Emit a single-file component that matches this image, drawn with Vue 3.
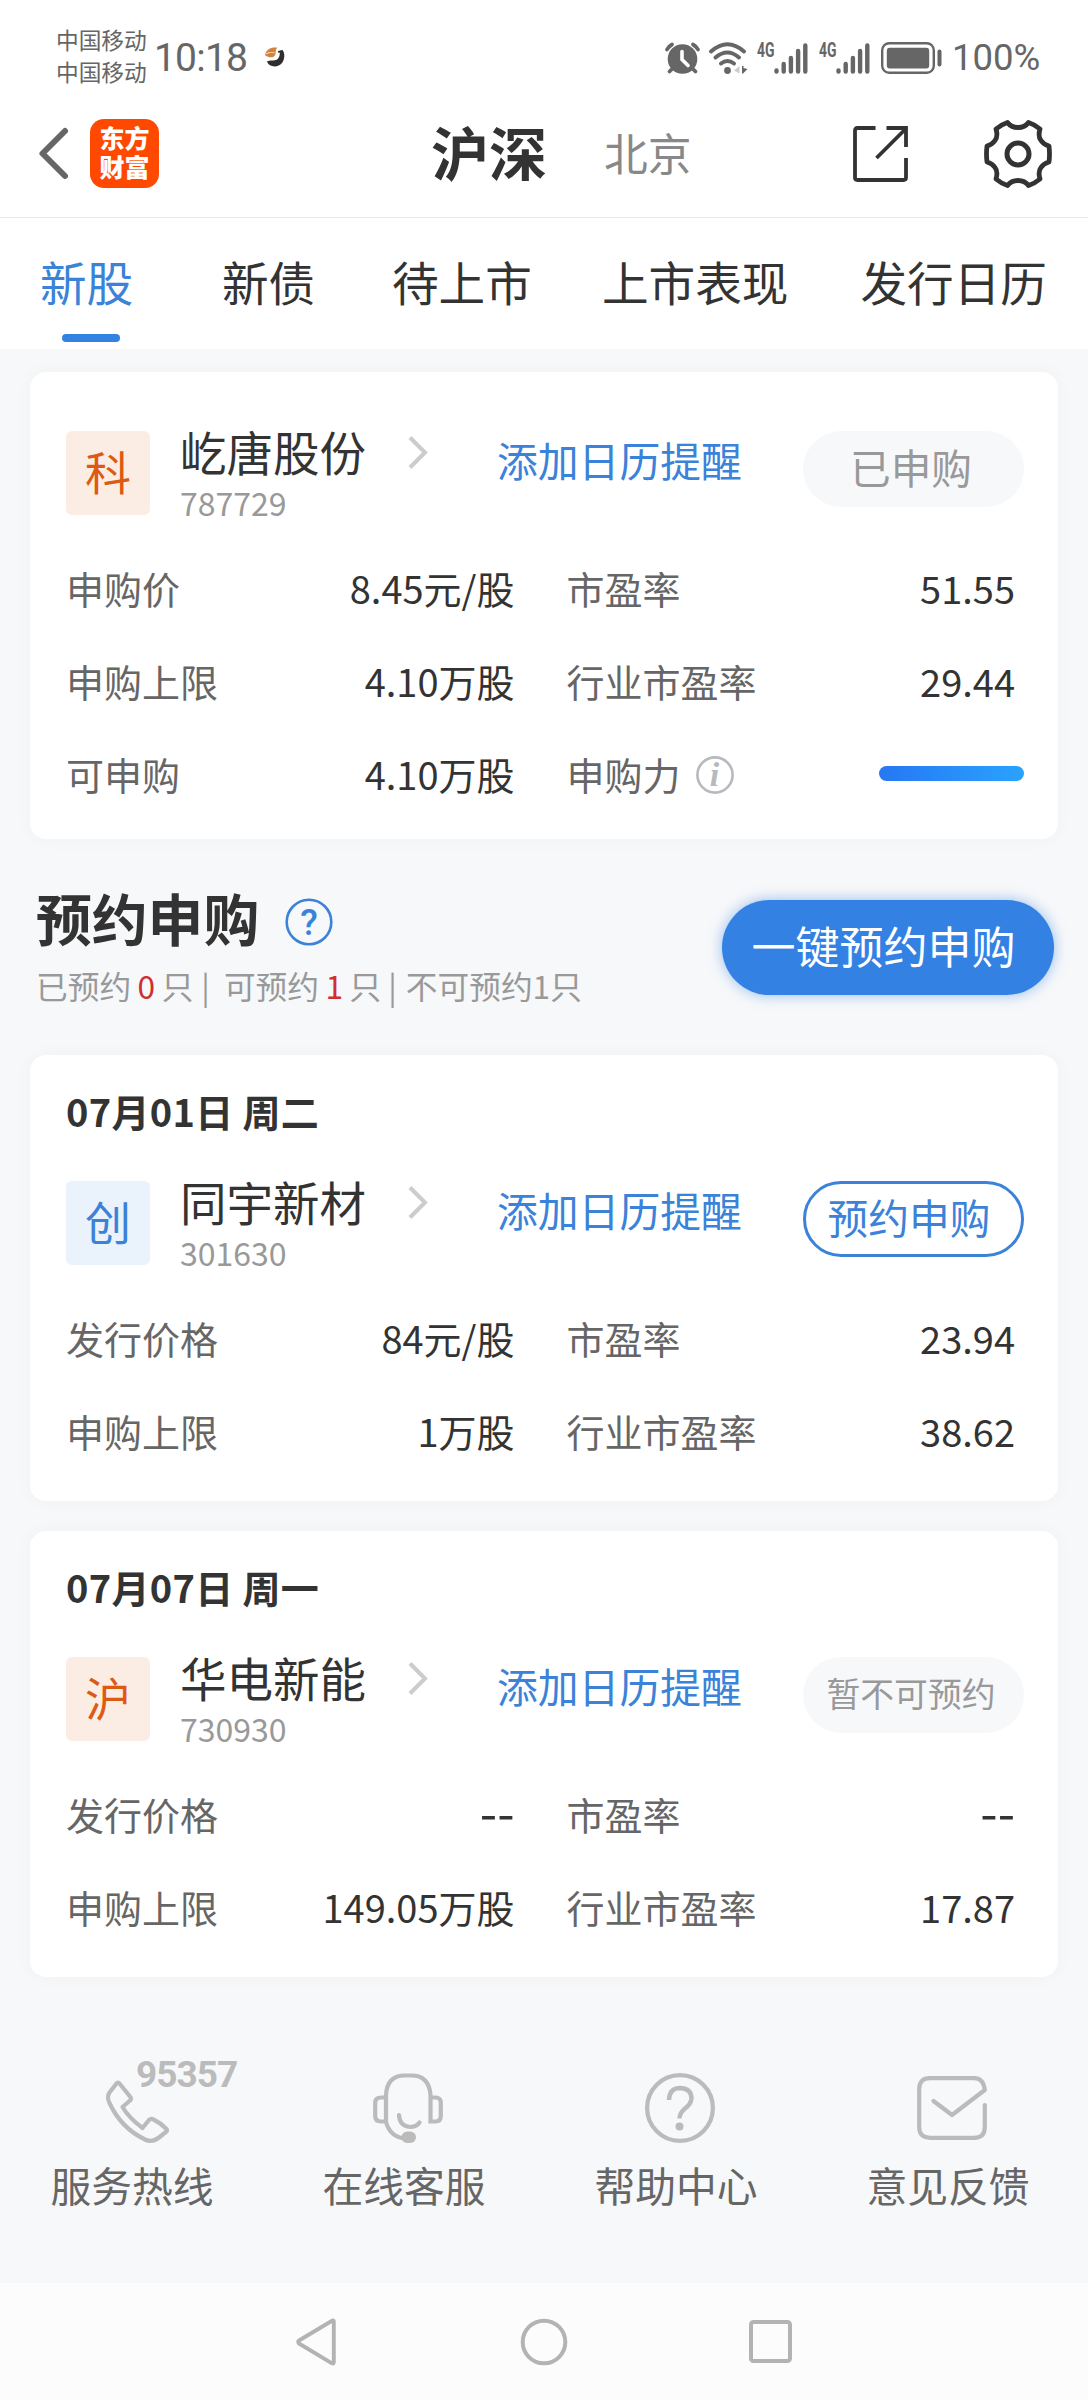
<script setup>
const tabs = ['新股', '新债', '待上市', '上市表现', '发行日历']

const cards = [
  {
    code: '787729', name: '屹唐股份', tag: '科', tone: 'orange',
    action: '已申购', actionStyle: 'done',
    rows: [
      [{ k: '申购价', v: '8.45元/股' }, { k: '市盈率', v: '51.55' }],
      [{ k: '申购上限', v: '4.10万股' }, { k: '行业市盈率', v: '29.44' }],
      [{ k: '可申购', v: '4.10万股' }, { k: '申购力', bar: true }]
    ]
  },
  {
    date: '07月01日 周二', code: '301630', name: '同宇新材', tag: '创', tone: 'blue',
    action: '预约申购', actionStyle: 'outline',
    rows: [
      [{ k: '发行价格', v: '84元/股' }, { k: '市盈率', v: '23.94' }],
      [{ k: '申购上限', v: '1万股' }, { k: '行业市盈率', v: '38.62' }]
    ]
  },
  {
    date: '07月07日 周一', code: '730930', name: '华电新能', tag: '沪', tone: 'orange',
    action: '暂不可预约', actionStyle: 'disabled',
    rows: [
      [{ k: '发行价格', v: '--' }, { k: '市盈率', v: '--' }],
      [{ k: '申购上限', v: '149.05万股' }, { k: '行业市盈率', v: '17.87' }]
    ]
  }
]
</script>

<template>
  <div class="page">
    <div class="status">
      <div class="carriers"><span>中国移动</span><span>中国移动</span></div>
      <span class="time">10:18</span>
      <svg class="bird" width="20" height="20" viewBox="0 0 20 20">
        <path d="M2 14.500C5 12.500 8.500 14 11 13C14 12 15.500 8 14.500 3.500L17.500 3C20 6 20 12 17 16C13 21 4 20.500 2 14.500Z" fill="#2f2d2e" />
        <path d="M0 8C1 2 7 -0.500 12.500 0.800C9.500 3 12 6 9.500 9C8 11 3 10.500 0.500 8.500Z" fill="#d4813e" />
        <path d="M0.500 6.500C4 4.500 7 5 10 5.300L9.500 6.300C6 5.500 4 6 0.500 7.500Z" fill="#f5cda4" />
        <circle cx="14" cy="4.800" r="1.100" fill="#2f2d2e" />
      </svg>
      <div class="indicators">
        <svg width="35" height="32" viewBox="0 0 35 32">
          <circle cx="17.500" cy="17" r="14.800" fill="#666" />
          <path d="M2 7.500Q3.500 4.500 7 2.500M33 7.500Q31.500 4.500 28 2.500M7 27L4.500 29.500M28 27L30.500 29.500" stroke="#666" stroke-width="3.800" stroke-linecap="round" fill="none" />
          <path d="M17 9.500V17.500L23 23.500" stroke="#fff" stroke-width="3.600" stroke-linecap="round" fill="none" />
        </svg>
        <svg class="wifi" width="39" height="32" viewBox="0 0 39 32">
          <g fill="none" stroke="#666" stroke-width="4" stroke-linecap="round">
            <path d="M2 9.500Q18.500 -5 35 9.500" />
            <path d="M6.500 15.500Q18.500 5.500 30 15.500" />
            <path d="M12 21.500Q18.500 16.500 25 21.500" />
          </g>
          <circle cx="18.500" cy="28.500" r="3.400" fill="#666" />
          <path d="M25 28.500L30.500 24V31.500Z" fill="#ccc" />
          <path d="M33 24L34.500 24L34.500 26L38.500 27L34 31.500H33Z" fill="#666" />
        </svg>
        <svg v-for="n in 2" :key="n" class="signal" width="52" height="32" viewBox="0 0 52 32">
          <text x="0" y="15" font-size="19.500" font-weight="700" fill="#666" textLength="17.500" lengthAdjust="spacingAndGlyphs">4G</text>
          <g stroke="#666" stroke-width="4.400" stroke-linecap="round">
            <path d="M19.500 28.500V29.500M26.700 22V29.500M33.900 16V29.500M41.100 9V29.500M48.300 3.500V29.500" />
          </g>
        </svg>
        <svg class="battery" width="61" height="32" viewBox="0 0 61 32">
          <rect x="1.200" y="1.200" width="51.600" height="29.600" rx="7" fill="none" stroke="#666" stroke-width="2.400" />
          <rect x="5.800" y="5.800" width="42.400" height="20.600" rx="3" fill="#666" />
          <rect x="56.500" y="7.500" width="4" height="17" rx="2" fill="#666" />
        </svg>
        <span class="percent">100%</span>
      </div>
    </div>

    <header class="header">
      <svg class="back" width="29" height="51" viewBox="0 0 29 51">
        <path d="M26 3L3.500 25.500L26 48" fill="none" stroke="#666" stroke-width="6" stroke-linecap="round" stroke-linejoin="round" />
      </svg>
      <div class="logo"><span>东方</span><span>财富</span></div>
      <span class="market active">沪深</span>
      <span class="market">北京</span>
      <svg class="share" width="55" height="56" viewBox="0 0 55 56">
        <path d="M22.500 2H4.500Q2 2 2 4.500V51.500Q2 54 4.500 54H50.500Q53 54 53 51.500V32M33.500 2H53V21M23.500 32L52.500 3" fill="none" stroke="#333" stroke-width="3.800" />
      </svg>
      <svg class="gear" width="68" height="68" viewBox="0 0 68 68">
        <path d="M23.500 2.500C26 6 29 7.500 34 7.500S42 6 44.500 2.500C49 4 52.500 6 56 9C54.500 14 55 18 57 20.500C59 23.500 61.500 25 65 26Q66 34 65 42C61.500 43 59 44.500 57 47.500C55 50 54.500 54 56 59C52.500 62 49 64 44.500 65.500C42 62 39 60.500 34 60.500S26 62 23.500 65.500C19 64 15.500 62 12 59C13.500 54 13 50 11 47.500C9 44.500 6.500 43 3 42Q2 34 3 26C6.500 25 9 23.500 11 20.500C13 18 13.500 14 12 9C15.500 6 19 4 23.500 2.500Z" fill="none" stroke="#333" stroke-width="4.800" stroke-linejoin="round" />
        <circle cx="34" cy="34" r="11" fill="none" stroke="#333" stroke-width="5" />
      </svg>
    </header>

    <nav class="tabs">
      <span v-for="(t, i) in tabs" :key="t" class="tab" :class="{ active: i === 0 }">{{ t }}</span>
    </nav>

    <main class="content">
      <template v-for="(c, i) in cards" :key="c.code">
        <section class="card" :class="{ dated: c.date }">
          <div v-if="c.date" class="date">{{ c.date }}</div>
          <div class="head">
            <span class="badge" :class="c.tone">{{ c.tag }}</span>
            <div class="ident">
              <span class="name">{{ c.name }}</span>
              <span class="code">{{ c.code }}</span>
            </div>
            <svg class="chev" width="20" height="33" viewBox="0 0 20 33">
              <path d="M2 1.500L17 16.500L2 31.500" fill="none" stroke="#ccc" stroke-width="4" />
            </svg>
            <span class="remind">添加日历提醒</span>
            <span class="action" :class="c.actionStyle">{{ c.action }}</span>
          </div>
          <div class="rows">
            <div v-for="(r, j) in c.rows" :key="j" class="row">
              <div v-for="cell in r" :key="cell.k" class="cell">
                <span class="label">{{ cell.k }}</span>
                <template v-if="cell.bar">
                  <svg class="info" width="38" height="38" viewBox="0 0 38 38">
                    <circle cx="19" cy="19" r="17.600" fill="none" stroke="#b6b9be" stroke-width="2.600" />
                    <text x="18.500" y="30" text-anchor="middle" class="info-i">i</text>
                  </svg>
                  <span class="power"></span>
                </template>
                <span v-else class="value" :class="{ none: cell.v === '--' }">{{ cell.v }}</span>
              </div>
            </div>
          </div>
        </section>

        <div v-if="i === 0" class="section">
          <div>
            <div class="title">
              <span>预约申购</span>
              <svg width="48" height="48" viewBox="0 0 48 48">
                <circle cx="24" cy="24" r="22.300" fill="none" stroke="#3b82d9" stroke-width="2.600" />
                <text x="24" y="36.500" text-anchor="middle" class="ask">?</text>
              </svg>
            </div>
            <div class="summary">
              <span>已预约</span><b>0</b><span>只</span><i class="s1">|</i>
              <span>可预约</span><b>1</b><span>只</span><i class="s2">|</i><span>不可预约1只</span>
            </div>
          </div>
          <span class="batch">一键预约申购</span>
        </div>
      </template>

      <footer class="support">
        <div class="item">
          <div class="icon">
            <svg width="70" height="70" viewBox="-5 -7 70 70">
              <path d="M10.500 3.500Q12 1.800 13.500 3.500L24 16.500Q26 19 24 20.500L16.500 27Q23 38 36.500 48L43 40Q45 38 47.500 39.500Q54 42.500 60.500 49Q61.500 50.500 60.500 51.500L53 57.500Q46 63 39 59.500Q15 48 3.500 23Q0.500 17 3.500 12.500Z" fill="none" stroke="#bbb" stroke-width="4.200" stroke-linejoin="round" />
            </svg>
            <span class="hotline">95357</span>
          </div>
          <span class="text">服务热线</span>
        </div>
        <div class="item">
          <div class="icon">
            <svg width="70" height="70" viewBox="0 0 70 70">
              <g fill="none" stroke="#bbb" stroke-width="4.200" stroke-linecap="round">
                <path d="M13 24.500H8Q2.200 24.500 2.200 30V43Q2.200 48.500 8 48.500H13" />
                <path d="M31 65.500Q17 63.500 13 49V22Q14 2.500 32 2.500H38.500Q56 2.500 57.500 22V48.500H62.500Q67.800 48.500 67.800 43V30Q67.800 24.500 62.500 24.500H58" />
                <path d="M26 42Q26.500 53 37 54Q43.500 54 46.500 49.500" />
              </g>
              <rect x="28.500" y="58.500" width="14.500" height="11.500" rx="5.700" fill="#bbb" />
            </svg>
          </div>
          <span class="text">在线客服</span>
        </div>
        <div class="item">
          <div class="icon">
            <svg width="70" height="70" viewBox="0 0 70 70">
              <circle cx="35" cy="35" r="32.900" fill="none" stroke="#bbb" stroke-width="4.200" />
              <path d="M24 27Q24.500 15 35 15Q46.500 15.500 46.500 25.500Q46 31 40 35.500Q34.500 40 34.500 45.500" fill="none" stroke="#bbb" stroke-width="4.400" />
              <circle cx="34.500" cy="53.500" r="4" fill="#bbb" />
            </svg>
          </div>
          <span class="text">帮助中心</span>
        </div>
        <div class="item">
          <div class="icon">
            <svg width="70" height="70" viewBox="0 -3 70 70">
              <path d="M67.800 29V51Q67.800 61.800 57 61.800H13Q2.200 61.800 2.200 51V13Q2.200 2.200 13 2.200H57Q66.500 2.200 67.800 14L35 39L16.500 25" fill="none" stroke="#bbb" stroke-width="4.200" stroke-linecap="round" stroke-linejoin="round" />
            </svg>
          </div>
          <span class="text">意见反馈</span>
        </div>
      </footer>
    </main>

    <div class="sysnav">
      <svg width="40" height="48" viewBox="0 0 40 48">
        <path d="M36.500 2.500Q37.800 2 37.800 4V44Q37.800 46 36 45.300L3 25.500Q1.500 24 3 22.500Z" fill="none" stroke="#b3b3b3" stroke-width="3.900" stroke-linejoin="round" />
      </svg>
      <svg class="home" width="48" height="48" viewBox="0 0 48 48">
        <circle cx="24" cy="24" r="21.300" fill="none" stroke="#b3b3b3" stroke-width="4" />
      </svg>
      <svg class="recent" width="43" height="43" viewBox="0 0 43 43">
        <rect x="2" y="2" width="39" height="39" rx="2.500" fill="none" stroke="#b3b3b3" stroke-width="4" />
      </svg>
    </div>
  </div>
</template>

<style>
body {
  margin: 0;
}
</style>

<style scoped>
.page {
  width: 1088px;
  height: 2400px;
  overflow: hidden;
  display: flex;
  flex-direction: column;
  background: #fff;
  color: #333;
  font-family: "Noto Sans CJK SC", sans-serif;
  white-space: nowrap;
}
svg {
  display: block;
  flex: none;
  overflow: visible;
}

/* system status bar */
.status {
  box-sizing: border-box;
  height: 92px;
  padding: 23px 48px 0 56px;
  display: flex;
  align-items: center;
  color: #666;
}
.carriers {
  display: flex;
  flex-direction: column;
  width: 98px;
  margin-bottom: 3px;
  font-size: 22.7px;
  line-height: 32px;
}
.time {
  font: 39px/50px Roboto, sans-serif;
  letter-spacing: -0.8px;
  width: 111px;
}
.bird {
  margin-bottom: 1px;
}
.indicators {
  margin-left: auto;
  display: flex;
  align-items: center;
  font-family: Roboto, sans-serif;
}
.wifi {
  margin-left: 9px;
}
.signal {
  margin-left: 9px;
}
.signal + .signal {
  margin-left: 10px;
}
.battery {
  margin-left: 10px;
}
.percent {
  width: 88px;
  margin-left: 10px;
  font-size: 36.5px;
  line-height: 50px;
}

/* title bar */
.header {
  box-sizing: border-box;
  height: 126px;
  padding-left: 39px;
  display: flex;
  align-items: center;
  border-bottom: 1px solid #eaeaea;
}
.header svg,
.logo {
  margin-bottom: 2px;
}
.logo {
  display: flex;
  flex-direction: column;
  align-items: center;
  box-sizing: border-box;
  width: 69px;
  height: 69px;
  padding-top: 4px;
  margin-left: 22px;
  border-radius: 14px;
  background: #ff4800;
  color: #fff;
  font-size: 25px;
  font-weight: 900;
  line-height: 29px;
}
.market {
  width: 90px;
  margin: 0 0 6px 57px;
  font-size: 43.8px;
  line-height: 80px;
  color: #888;
}
.market.active {
  width: 116px;
  margin: 0 0 8px 272px;
  font-size: 58px;
  font-weight: 700;
  color: #333;
}
.share {
  margin-left: 159px;
}
.gear {
  margin-left: 76px;
}

/* category tabs */
.tabs {
  height: 131px;
  padding-left: 40px;
  display: grid;
  grid-template-columns: 182px 170px 210px 258.5px 1fr;
}
.tab {
  position: relative;
  font-size: 46.6px;
  line-height: 126px;
}
.tab.active {
  color: #3b82d9;
}
.tab.active::after {
  content: "";
  position: absolute;
  left: 22px;
  top: 116px;
  width: 58px;
  height: 8px;
  border-radius: 4px;
  background: #3381e3;
}

.content {
  box-sizing: border-box;
  height: 1934px;
  padding: 23px 30px 0;
  background: #f7f8fa;
}

.card {
  box-sizing: border-box;
  width: 1028px;
  height: 467px;
  padding: 59px 34px 0 36px;
  border-radius: 16px;
  background: #fff;
  box-shadow: 0 0 18px rgba(0, 0, 0, 0.035);
}
.card.dated {
  height: 446px;
  padding-top: 0;
}
.card + .card {
  margin-top: 30px;
}
.date {
  height: 126px;
  font-size: 38px;
  font-weight: 700;
  letter-spacing: 0.3px;
  line-height: 112px;
}
.head {
  height: 84px;
  display: flex;
  align-items: flex-start;
}
.badge {
  width: 84px;
  height: 84px;
  border-radius: 6px;
  font-size: 46px;
  line-height: 79px;
  text-align: center;
}
.badge.orange {
  background: #fcede4;
  color: #dc5a14;
}
.badge.blue {
  background: #eaf2fc;
  color: #3b82d9;
}
.ident {
  width: 228px;
  margin-left: 30px;
  display: flex;
  flex-direction: column;
}
.name {
  font-size: 46.5px;
  line-height: 39px;
}
.code {
  font-size: 32px;
  line-height: 64px;
  color: #999;
}
.chev {
  margin-top: 5px;
}
.remind {
  margin-left: 69px;
  font-size: 40.8px;
  line-height: 57px;
  color: #3b82d9;
}
.action {
  box-sizing: border-box;
  width: 221px;
  height: 76px;
  margin-left: auto;
  padding-right: 5px;
  border-radius: 38px;
  background: #f7f8fa;
  color: #999;
  font-size: 40.7px;
  line-height: 71px;
  text-align: center;
}
.action.outline {
  padding-right: 9px;
  border: 3px solid #3b82d9;
  background: #fff;
  color: #3b82d9;
  line-height: 66px;
}
.action.disabled {
  font-size: 33.8px;
}
.rows {
  margin-top: 26px;
}
.row {
  height: 93px;
  width: 949px;
  display: flex;
  gap: 52px;
}
.cell {
  flex: 1;
  display: flex;
  align-items: center;
  font-size: 38px;
}
.label {
  color: #666;
}
.value {
  margin-left: auto;
}
.value.none {
  padding-bottom: 8px;
  font-size: 50px;
  line-height: 60px;
}
.info {
  margin: 3px 0 0 15px;
}
.info-i {
  font: italic 700 34px "Liberation Serif", serif;
  fill: #b6b9be;
}
.power {
  width: 145px;
  height: 15px;
  margin: 0 -9px 0 auto;
  border-radius: 8px;
  background: linear-gradient(90deg, #2678f2, #2aa2ff);
}

/* reservation heading */
.section {
  box-sizing: border-box;
  height: 216px;
  padding: 43px 4px 0 6px;
  display: flex;
  justify-content: space-between;
}
.title {
  height: 70px;
  display: flex;
  font-size: 55.8px;
  font-weight: 700;
  line-height: 70px;
}
.title svg {
  margin: 16px 0 0 26px;
}
.ask {
  font: 500 36px Roboto, sans-serif;
  fill: #3b82d9;
}
.summary {
  display: flex;
  font-size: 31.7px;
  line-height: 66px;
  color: #999;
}
.summary b {
  margin: 0 6.5px;
  font-weight: 400;
  color: #d12f2f;
}
.summary i {
  font-style: normal;
}
.s1 {
  margin: 0 14px 0 8px;
}
.s2 {
  margin: 0 9px 0 7px;
}
.batch {
  box-sizing: border-box;
  width: 332px;
  height: 95px;
  margin-top: 18px;
  padding-right: 9px;
  border-radius: 48px;
  background: #3381e3;
  box-shadow: 0 0 14px rgba(51, 129, 227, 0.5);
  color: #fff;
  font-size: 44px;
  line-height: 91px;
  text-align: center;
}

/* support links */
.support {
  margin-left: -34px;
  padding-top: 96px;
  display: grid;
  grid-template-columns: repeat(4, 272px);
}
.item {
  display: flex;
  flex-direction: column;
  align-items: center;
}
.icon {
  position: relative;
  height: 70px;
  margin-left: 8px;
}
.hotline {
  position: absolute;
  left: 35px;
  top: -17px;
  font: 700 37px/37px Roboto, sans-serif;
  letter-spacing: -1px;
  color: #bbb;
}
.text {
  margin-top: 11px;
  font-size: 40.8px;
  line-height: 61px;
  color: #666;
}

/* system navigation */
.sysnav {
  flex: 1;
  padding-left: 296px;
  display: flex;
  align-items: center;
  background: #fcfcfc;
}
.home {
  margin-left: 183.5px;
}
.recent {
  margin-left: 181px;
}
</style>
